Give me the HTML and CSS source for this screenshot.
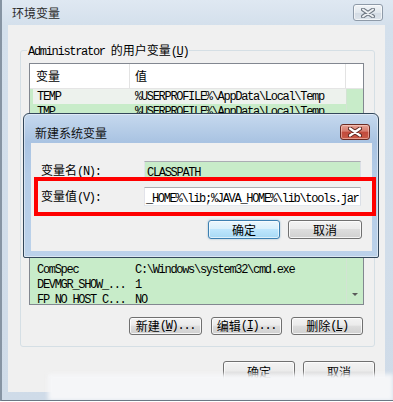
FILE: index.html
```html
<!DOCTYPE html>
<html>
<head>
<meta charset="utf-8">
<link rel="stylesheet" href="styles.css">
</head>
<body>
<div class="win">
  <div class="titlebar">
    <span class="title">环境变量</span>
    <span class="xbtn inactive">
      <svg width="14" height="10" viewBox="0 0 14 10"><path d="M2 1.5L12 8.5M12 1.5L2 8.5" stroke="#6f7883" stroke-width="4" stroke-linecap="round"/><path d="M2 1.5L12 8.5M12 1.5L2 8.5" stroke="#eef1f4" stroke-width="2" stroke-linecap="round"/></svg>
    </span>
  </div>
  <div class="client">
    <fieldset class="group">
      <legend><span class="m">Administrator </span>的用户变量<span class="m">(<u>U</u>)</span></legend>
      <div class="list">
        <div class="lhead"><div class="c1">变量</div><div class="c2">值</div><div class="c3"></div></div>
        <div class="lbody">
          <div class="rows">
            <div class="row sel"><span class="c1 m">TEMP</span><span class="c2 m">%USERPROFILE%\AppData\Local\Temp</span></div>
            <div class="row"><span class="c1 m">TMP</span><span class="c2 m">%USERPROFILE%\AppData\Local\Temp</span></div>
            <div class="gap"></div>
            <div class="row"><span class="c1 m">ComSpec</span><span class="c2 m">C:\Windows\system32\cmd.exe</span></div>
            <div class="row"><span class="c1 m">DEVMGR_SHOW_...</span><span class="c2 m">1</span></div>
            <div class="row"><span class="c1 m">FP_NO_HOST_C...</span><span class="c2 m">NO</span></div>
          </div>
          <div class="sbar"><span class="arrow"></span></div>
        </div>
      </div>
      <div class="btnrow">
        <div class="btn b-new">新建<span class="m">(<u>W</u>)...</span></div>
        <div class="btn b-edit">编辑<span class="m">(<u>I</u>)...</span></div>
        <div class="btn b-del">删除<span class="m">(<u>L</u>)</span></div>
      </div>
    </fieldset>
    <div class="btnrow bottom">
      <div class="btn">确定</div>
      <div class="btn">取消</div>
    </div>
  </div>

  <div class="dialog">
    <div class="dtitle">
      <span class="dtext">新建系统变量</span>
      <span class="xbtn active">
        <svg width="14" height="10" viewBox="0 0 14 10"><path d="M2 1.5L12 8.5M12 1.5L2 8.5" stroke="#5b2620" stroke-width="4.2" stroke-linecap="round"/><path d="M2 1.5L12 8.5M12 1.5L2 8.5" stroke="#ffffff" stroke-width="2.2" stroke-linecap="round"/></svg>
      </span>
    </div>
    <div class="dclient">
      <div class="form">
        <div class="label">变量名<span class="m">(N):</span></div>
        <div class="input green"><span class="m">CLASSPATH</span></div>
        <div class="label">变量值<span class="m">(V):</span></div>
        <div class="input val"><span class="m">_HOME%\lib;%JAVA_HOME%\lib\tools.jar</span></div>
      </div>
      <div class="dbtns">
        <div class="btn default b-ok">确定</div>
        <div class="btn b-cancel">取消</div>
      </div>
    </div>
  </div>

  <div class="redbox"></div>
  <div class="smear"></div>
</div>
</body>
</html>
```

FILE: styles.css
```css
* { box-sizing: border-box; }
html, body { margin: 0; padding: 0; }
body {
  width: 393px;
  height: 402px;
  overflow: hidden;
  background: #ffffff;
  font-family: "Noto Sans CJK SC", "Noto Sans", sans-serif;
  font-size: 12px;
  color: #000;
}
.m {
  font-family: "Liberation Mono", "Noto Sans CJK SC", monospace;
  font-size: 12px;
  letter-spacing: -1.3px;
}
.win {
  position: relative;
  width: 393px;
  height: 401px;
  overflow: hidden;
  background: linear-gradient(#dfe8f2, #d4e0ec 25px, #cfdbe8);
  border-left: 2px solid #8694a3;
  border-bottom: 1px solid #6b7784;
}
.titlebar {
  height: 25px;
  display: flex;
  align-items: center;
  padding-left: 10px;
}
.title { color: #2a2a2a; line-height: 16px; }
.xbtn {
  display: flex;
  align-items: center;
  justify-content: center;
  width: 30px;
  height: 17px;
  border-radius: 3px;
}
.xbtn.inactive {
  margin-left: auto;
  margin-right: 10px;
  border: 1px solid #8e9aa8;
  background: linear-gradient(#f1f4f7, #e2e8ee 50%, #d3dbe4 51%, #dde4eb);
  box-shadow: inset 0 0 0 1px rgba(255,255,255,0.6);
}
.client {
  margin: 0 8px 0 6px;
  height: 367px;
  background: #f0f0f0;
  padding: 18px 10px 0 12px;
}
.group {
  margin: 0;
  width: 355px;
  min-width: 0;
  padding: 6px 10px 11px 8px;
  border: 1px solid #d5dfe5;
  border-radius: 3px;
}
.group legend {
  padding: 0 1px;
  margin-left: -2px;
  height: 14px;
  line-height: 14px;
}
.list {
  width: 335px;
  height: 242px;
  border: 1px solid #828790;
  background: #c8ecc9;
  display: flex;
  flex-direction: column;
}
.lhead {
  height: 25px;
  flex: none;
  display: flex;
  background: #ffffff;
  border-bottom: 1px solid #e5e5e5;
  line-height: 24px;
}
.lhead .c1 { width: 100px; padding-left: 6px; border-right: 1px solid #e3e3e3; }
.lhead .c2 { width: 216px; padding-left: 5px; border-right: 1px solid #e3e3e3; }
.lhead .c3 { flex: 1; }
.lbody {
  flex: 1;
  display: flex;
  overflow: hidden;
}
.rows { width: 316px; }
.row {
  height: 15px;
  display: flex;
  line-height: 16px;
  white-space: nowrap;
}
.row .c1 { width: 100px; padding-left: 7px; }
.row .c2 { padding-left: 5px; }
.row.sel { background: linear-gradient(to right, transparent 3px, #edf2ed 3px); }
.gap { height: 143px; }
.sbar {
  flex: 1;
  border-left: 1px solid #d2e4d3;
  display: flex;
  align-items: flex-end;
  justify-content: center;
  padding-bottom: 8px;
}
.arrow {
  width: 0;
  height: 0;
  border-left: 3px solid transparent;
  border-right: 3px solid transparent;
  border-top: 3px solid #5a5a5a;
}
.btn {
  display: flex;
  align-items: center;
  justify-content: center;
  border: 1px solid #707070;
  border-radius: 3px;
  background: linear-gradient(#f3f3f3, #ebebeb 45%, #dddddd 50%, #d0d0d0);
  box-shadow: inset 0 0 0 1px rgba(255,255,255,0.75);
  white-space: nowrap;
  line-height: 14px;
}
.btnrow {
  display: flex;
  justify-content: flex-end;
  gap: 9px;
  margin-top: 12px;
  margin-right: 1px;
}
.btnrow .btn { height: 18px; }
.b-new { width: 73px; }
.b-edit { width: 71px; }
.b-del { width: 72px; }
.btnrow.bottom {
  margin-top: 14px;
  margin-right: 0;
  gap: 8px;
}
.btnrow.bottom .btn { width: 72px; height: 22px; align-items: flex-start; padding-top: 3px; }

.dialog {
  position: absolute;
  left: 21px;
  top: 113px;
  width: 356px;
  height: 145px;
  border: 1px solid #33475a;
  border-radius: 6px 6px 2px 2px;
  background: linear-gradient(#c6d9ee, #a9c3e2 28px, #b4cce7 60px, #bcd2ea);
  padding: 0 6px 6px 7px;
  display: flex;
  flex-direction: column;
  box-shadow: inset 0 0 0 1px rgba(255,255,255,0.45);
}
.dtitle {
  height: 29px;
  flex: none;
  display: flex;
  align-items: flex-start;
  padding-left: 4px;
}
.dtext { margin-top: 11px; line-height: 16px; color: #111; }
.xbtn.active {
  margin-left: auto;
  margin-right: 2px;
  margin-top: 10px;
  height: 16px;
  border: 1px solid #6b2b23;
  background: linear-gradient(#e6a497, #d77a6c 45%, #c24a3b 50%, #c95b48);
  box-shadow: inset 0 0 0 1px rgba(255,220,210,0.5);
}
.dclient {
  flex: 1;
  background: #f0f0f0;
  padding: 18px 10px 0 10px;
}
.form {
  display: grid;
  grid-template-columns: 103px 217px;
  row-gap: 7px;
  align-items: center;
}
.label { line-height: 16px; white-space: nowrap; }
.input {
  height: 19px;
  border: 1px solid;
  border-color: #abadb3 #dbdfe6 #e3e9ef #e2e3ea;
  background: #ffffff;
  line-height: 17px;
  padding: 0 2px;
  white-space: nowrap;
  overflow: hidden;
}
.input.green { background: #c8ecc9; }
.input.val { padding-left: 1px; }
.dbtns {
  display: flex;
  justify-content: flex-end;
  gap: 8px;
  margin-top: 14px;
}
.dbtns .btn { height: 19px; }
.b-ok { width: 72px; }
.b-cancel { width: 74px; }
.btn.default {
  border-color: #3c7fb1;
  background: linear-gradient(#eaf6fd, #d9f0fc 45%, #bee6fd 50%, #a7d9f5);
  box-shadow: inset 0 0 0 1px rgba(255,255,255,0.6), 0 0 2px rgba(60,127,177,0.5);
}
.redbox {
  position: absolute;
  left: 32px;
  top: 177px;
  width: 342px;
  height: 39px;
  border: 4px solid #ff0000;
}
.smear {
  position: absolute;
  left: 46px;
  top: 374px;
  width: 345px;
  height: 27px;
  background: #f5f6f8;
  filter: blur(2px);
}
```
